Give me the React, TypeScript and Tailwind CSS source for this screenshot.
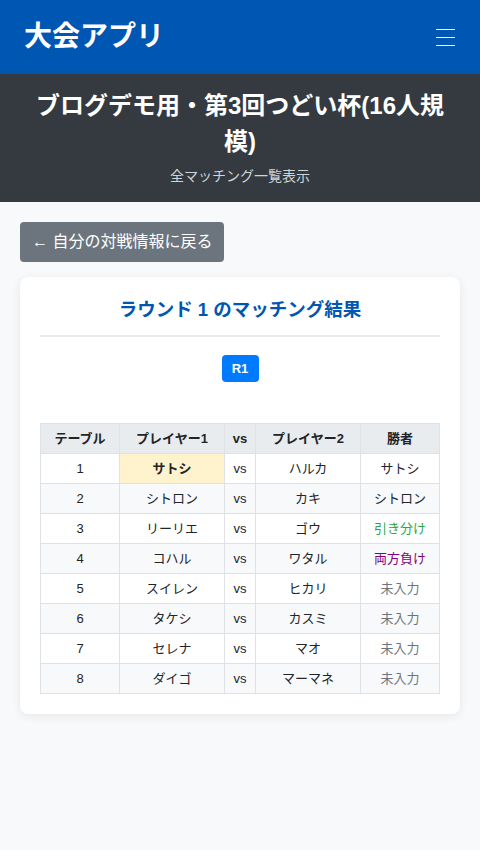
const font = { fontFamily: '"Liberation Sans", Arial, "Noto Sans CJK JP", sans-serif' }

type Match = { table: number; p1: string; p2: string; winner: string; kind: 'p1' | 'p2' | 'draw' | 'lose' | 'none' }

const matches: Match[] = [
  { table: 1, p1: 'サトシ', p2: 'ハルカ', winner: 'サトシ', kind: 'p1' },
  { table: 2, p1: 'シトロン', p2: 'カキ', winner: 'シトロン', kind: 'none' },
  { table: 3, p1: 'リーリエ', p2: 'ゴウ', winner: '引き分け', kind: 'draw' },
  { table: 4, p1: 'コハル', p2: 'ワタル', winner: '両方負け', kind: 'lose' },
  { table: 5, p1: 'スイレン', p2: 'ヒカリ', winner: '未入力', kind: 'none' },
  { table: 6, p1: 'タケシ', p2: 'カスミ', winner: '未入力', kind: 'none' },
  { table: 7, p1: 'セレナ', p2: 'マオ', winner: '未入力', kind: 'none' },
  { table: 8, p1: 'ダイゴ', p2: 'マーマネ', winner: '未入力', kind: 'none' },
]

function winnerClass(m: Match) {
  if (m.kind === 'draw') return 'text-[#28a745]'
  if (m.kind === 'lose') return 'text-[#800080]'
  if (m.winner === '未入力') return 'text-[#6c757d]'
  return 'text-[#212529]'
}

export default function App() {
  return (
    <div className="min-h-[850px] bg-[#f8f9fa] text-[#212529]" style={font}>
      <header className="h-[74px] bg-[#0056b3] flex items-center justify-between pl-6 pr-[25px]">
        <h1 className="text-[28px] font-bold text-white leading-none">大会アプリ</h1>
        <div className="flex flex-col gap-[7px] w-[19px]">
          <span className="block h-px bg-white" />
          <span className="block h-px bg-white" />
          <span className="block h-px bg-white" />
        </div>
      </header>

      <section className="bg-[#343a40] text-center px-5 pt-[14px] pb-[16px]">
        <h2 className="text-[24px] font-bold text-white leading-[36px]">ブログデモ用・第3回つどい杯(16人規模)</h2>
        <p className="mt-[6px] text-[14px] text-[#ced4da] leading-5">全マッチング一覧表示</p>
      </section>

      <main className="px-5 pt-5">
        <button className="h-[40px] px-[12px] rounded bg-[#6c757d] text-white text-[16px]">
          ← 自分の対戦情報に戻る
        </button>

        <div className="mt-[15px] bg-white rounded-lg shadow-[0_2px_10px_rgba(0,0,0,0.08)] px-5 pt-5 pb-5">
          <h3 className="text-center text-[18.5px] font-bold text-[#0056b3] leading-[26px] pb-[12px] border-b-2 border-[#e9ecef]">
            ラウンド 1 のマッチング結果
          </h3>

          <div className="flex justify-center mt-[18px]">
            <span className="inline-flex items-center justify-center w-[37px] h-[27px] rounded bg-[#007bff] text-white text-[13px] font-bold">
              R1
            </span>
          </div>

          <table className="w-full mt-[41px] border-collapse text-[13px] text-center">
            <thead>
              <tr className="bg-[#e9ecef]">
                <th className="h-[30px] w-[79px] border border-[#dee2e6] font-bold">テーブル</th>
                <th className="w-[105px] border border-[#dee2e6] font-bold">プレイヤー1</th>
                <th className="w-[31px] border border-[#dee2e6] font-bold">vs</th>
                <th className="w-[105px] border border-[#dee2e6] font-bold">プレイヤー2</th>
                <th className="border border-[#dee2e6] font-bold">勝者</th>
              </tr>
            </thead>
            <tbody>
              {matches.map((m, i) => (
                <tr key={m.table} className={i % 2 === 1 ? 'bg-[#f8f9fa]' : 'bg-white'}>
                  <td className="h-[30px] border border-[#dee2e6]">{m.table}</td>
                  <td className={m.kind === 'p1' ? 'border border-[#dee2e6] bg-[#fff3cd] font-bold' : 'border border-[#dee2e6]'}>{m.p1}</td>
                  <td className="border border-[#dee2e6]">vs</td>
                  <td className="border border-[#dee2e6]">{m.p2}</td>
                  <td className={`border border-[#dee2e6] ${winnerClass(m)}`}>{m.winner}</td>
                </tr>
              ))}
            </tbody>
          </table>
        </div>
      </main>
    </div>
  )
}
